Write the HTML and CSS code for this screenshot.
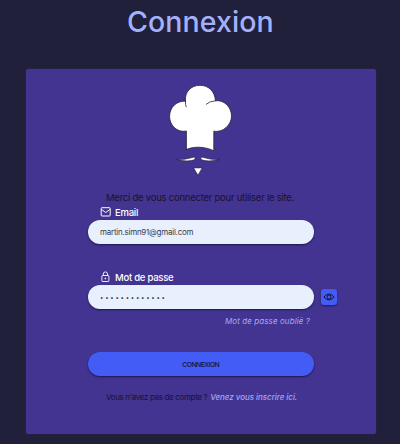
FILE: index.html
```html
<!DOCTYPE html>
<html lang="fr">
<head>
<meta charset="utf-8">
<title>Connexion</title>
<link rel="stylesheet" href="styles.css">
</head>
<body>
<h1 class="title"><span>Connexion</span></h1>
<main class="card">
  <svg class="logo" viewBox="160 80 80 100" width="80" height="100" aria-hidden="true">
    <g fill="#fff" stroke="#252238" stroke-width=".8" stroke-linejoin="round" stroke-linecap="round">
      <path d="M186.400 149.500V131C177 133 169.600 125 169.600 116.500C169.600 107 177 100.500 185.500 101.200C184.500 92 191 85.300 200 85.300C208.500 85.300 215 91.500 215.400 100.800C224 99.500 231.500 107 231.500 116C231.500 125 223 132.800 213.800 131.200V150.800C205 146.500 194 146 186.400 149.500Z"/>
      <path d="M185.500 101.200Q185 104.500 186.200 106.800M206.200 104.200Q209.500 101 215.400 100.800" fill="none"/>
      <path d="M177.200 159.600Q185 159.700 189.500 158.300Q193 157 195.200 157.200L194.900 159.600Q188 162.300 177.200 159.600Z" stroke-width=".6"/>
      <path d="M218.800 159.600Q211 159.700 206.500 158.300Q203 157 200.800 157.200L201.100 159.600Q208 162.300 218.800 159.600Z" stroke-width=".6"/>
      <path d="M193.900 168H202.100L198 175Z" stroke-width=".5"/>
    </g>
  </svg>
  <p class="intro">Merci de vous connecter pour utiliser le site.</p>
  <form class="form">
    <label class="label">
      <svg width="12" height="12" viewBox="0 0 12 12" fill="none" stroke="#fff" stroke-width="1"><rect x="1.200" y="1.700" width="9" height="8.300" rx=".8"/><path d="M1.500 3.500L5.700 6.500L9.900 3.500"/></svg>
      <span>Email</span>
    </label>
    <div class="field"><span class="email">martin.simn91@gmail.com</span></div>
    <label class="label second">
      <svg width="12" height="12" viewBox="0 0 12 12" fill="none" stroke="#fff" stroke-width=".9"><rect x="1.900" y="4.500" width="7" height="6" rx=".7"/><path d="M3.300 4.300V3A2.100 2.100 0 0 1 7.500 3V4.300M5.400 6.700V8.300M4.700 7.500H6.100"/></svg>
      <span>Mot de passe</span>
    </label>
    <div class="row">
      <div class="field"><span class="dots">•••••••••••••</span></div>
      <div class="eye">
        <svg width="12" height="10" viewBox="0 0 12 10" fill="none" stroke="#181536" stroke-width="1"><path d="M.8 5Q6-.9 11.200 5Q6 10.900 .8 5Z"/><circle cx="6" cy="5" r="2"/></svg>
      </div>
    </div>
    <a class="forgot">Mot de passe oublié ?</a>
    <div class="submit"><span>CONNEXION</span></div>
  </form>
  <p class="signup"><span class="question">Vous n'avez pas de compte ?</span><a class="register">Venez vous inscrire ici.</a></p>
</main>
</body>
</html>
```
FILE: styles.css
```css
* { box-sizing: border-box; }
body {
  margin: 0;
  height: 444px;
  overflow: hidden;
  background: #20203a;
  font-family: Inter, "Liberation Sans", sans-serif;
  color: #17132f;
}
.title {
  margin: 0;
  padding: 4px 0 0 127px;
  height: 69px;
  font-size: 28.500px;
  line-height: 36px;
  font-weight: 500;
  letter-spacing: .1px;
  color: #a3b1fd;
  white-space: nowrap;
}
.card {
  width: 350px;
  height: 365px;
  margin-left: 26px;
  padding-top: 11px;
  border-radius: 3px;
  background: #433491;
  box-shadow: 0 0 1px #50449b;
}
.logo { display: block; margin-left: 134px; }
.intro {
  margin: 11px 0 0 80px;
  font-size: 9.500px;
  line-height: 14px;
  letter-spacing: -.24px;
  white-space: nowrap;
}
.form { width: 225.500px; margin-left: 62px; }
.label {
  display: flex;
  align-items: center;
  gap: 3px;
  height: 14px;
  padding-left: 12px;
  font-size: 9.500px;
  font-weight: 500;
  letter-spacing: -.24px;
  color: #fff;
  white-space: nowrap;
}
.second { margin-top: 26px; }
.field {
  flex: none;
  display: flex;
  align-items: center;
  width: 225.500px;
  height: 24px;
  margin-top: 1px;
  padding-left: 12px;
  border-radius: 12px;
  background: #e8f0fe;
  box-shadow: 0 1px 2px #1d174b;
  font-size: 8px;
  letter-spacing: -.25px;
  color: #3a3c4c;
  white-space: nowrap;
}
.row { display: flex; align-items: center; gap: 7.500px; }
.dots { font-size: 6px; letter-spacing: 1.750px; color: #1c1d2c; }
.eye {
  flex: none;
  display: flex;
  align-items: center;
  justify-content: center;
  width: 16px;
  height: 16px;
  border-radius: 3px;
  background: #425cf5;
  box-shadow: 0 1px 2px #231b58;
}
.forgot {
  display: block;
  margin: 6px 0 0 137px;
  font-size: 8px;
  line-height: 12px;
  font-style: italic;
  letter-spacing: .09px;
  color: #a3a8f5;
  white-space: nowrap;
}
.submit {
  display: flex;
  align-items: center;
  justify-content: center;
  height: 24px;
  margin-top: 25px;
  border-radius: 12px;
  background: #425cf5;
  box-shadow: 0 1px 2px #1d174b;
  font-size: 6.800px;
  font-weight: 500;
  letter-spacing: -.5px;
}
.signup {
  display: flex;
  gap: 3px;
  margin: 15px 0 0 80px;
  font-size: 8px;
  line-height: 12px;
  white-space: nowrap;
}
.question { letter-spacing: -.35px; }
.register { font-style: italic; font-weight: 500; letter-spacing: -.05px; color: #a3a8f5; }
```
